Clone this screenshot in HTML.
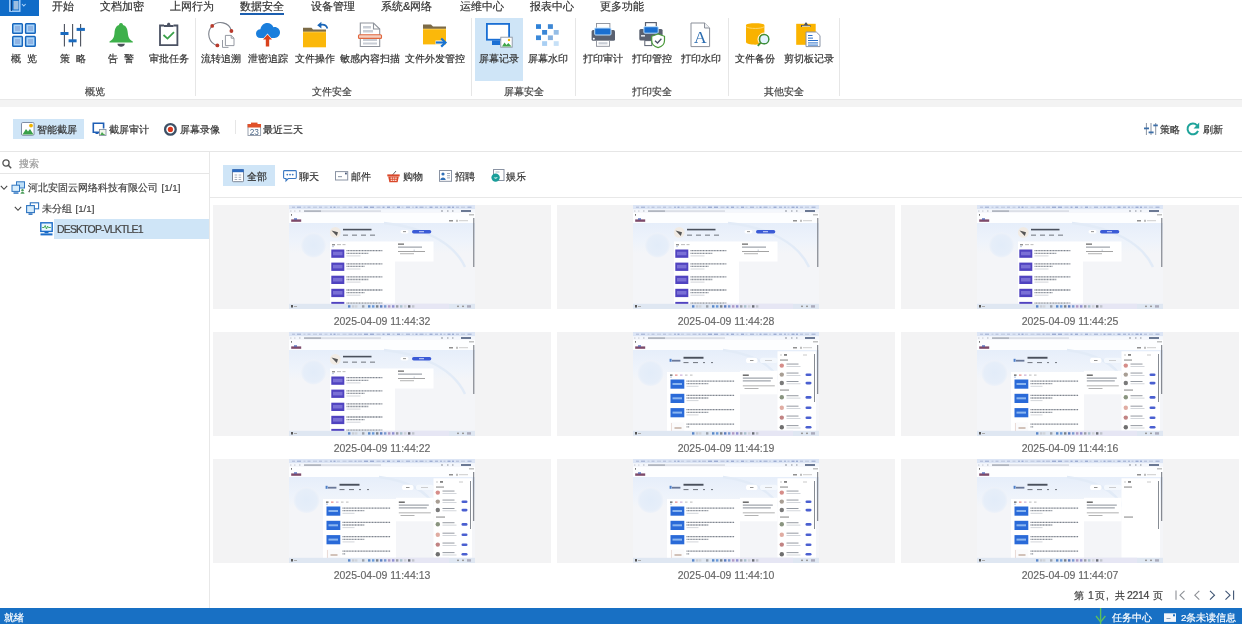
<!DOCTYPE html>
<html><head><meta charset="utf-8">
<style>
*{margin:0;padding:0;box-sizing:border-box}
html,body{width:1242px;height:624px;overflow:hidden;background:#fff}
body{position:relative;font-family:"Liberation Sans",sans-serif;color:#333}
.a{position:absolute;white-space:nowrap;will-change:transform;-webkit-text-stroke:0.2px currentColor}
.tab{font-size:11.2px;line-height:12px;top:-0.5px;color:#333}
.rl{font-size:9.6px;line-height:10px;top:53.8px;color:#333;text-align:center;width:80px}
.gl{font-size:9.6px;line-height:10px;top:87.3px;color:#444;text-align:center;width:80px}
.sep{position:absolute;top:18px;width:1px;height:78px;background:#e6e6e6}
svg{position:absolute;overflow:visible;z-index:2}
.tb{font-size:9.6px;line-height:10px;top:124.8px;color:#333}
.ft{font-size:9.6px;line-height:10px;top:171.5px;color:#333}
.cell{position:absolute;background:#f3f3f4;height:104px;width:338px}
.date{position:absolute;will-change:transform;-webkit-text-stroke:0.15px currentColor;font-size:10.5px;line-height:11px;color:#666;width:338px;text-align:center}
.pg{font-size:10px;line-height:11px;top:590px;color:#444}
.th{position:absolute;width:186px;height:104px;overflow:hidden;filter:blur(0.3px)}
</style></head><body>

<!-- top menu -->
<div class="a" style="left:0;top:0;width:39px;height:15.5px;background:#106cc8"></div>
<svg style="left:9px;top:0" width="18" height="13" viewBox="0 0 18 13">
 <rect x="0.8" y="-1" width="10" height="12.2" fill="none" stroke="#a9d2fb" stroke-width="1.4"/>
 <rect x="4.5" y="1" width="5" height="8.5" fill="#9bbde0"/>
 <line x1="2.5" y1="0" x2="2.5" y2="11" stroke="#0b3e80" stroke-width="1"/>
 <path d="M13 4 L14.8 6 L16.6 4" fill="none" stroke="#a9d2fb" stroke-width="1.1"/>
</svg>
<div class="a tab" style="left:51.5px">开始</div>
<div class="a tab" style="left:100px">文档加密</div>
<div class="a tab" style="left:170px">上网行为</div>
<div class="a tab" style="left:240px">数据安全</div>
<div class="a" style="left:240px;top:13.3px;width:44px;height:2px;background:#1c5fb0"></div>
<div class="a tab" style="left:310.5px">设备管理</div>
<div class="a tab" style="left:380.5px">系统&amp;网络</div>
<div class="a tab" style="left:460px">运维中心</div>
<div class="a tab" style="left:530px">报表中心</div>
<div class="a tab" style="left:600px">更多功能</div>

<!-- ribbon -->
<div class="a" style="left:475px;top:18px;width:48px;height:63px;background:#cfe5f7"></div>
<div class="sep" style="left:195px"></div>
<div class="sep" style="left:471px"></div>
<div class="sep" style="left:575px"></div>
<div class="sep" style="left:728px"></div>
<div class="sep" style="left:839px"></div>

<div class="a rl" style="left:-16px">概&nbsp;&nbsp;览</div>
<div class="a rl" style="left:32.5px">策&nbsp;&nbsp;略</div>
<div class="a rl" style="left:81.4px">告&nbsp;&nbsp;警</div>
<div class="a rl" style="left:128.7px">审批任务</div>
<div class="a rl" style="left:181px">流转追溯</div>
<div class="a rl" style="left:228px">泄密追踪</div>
<div class="a rl" style="left:275.4px">文件操作</div>
<div class="a rl" style="left:330.4px">敏感内容扫描</div>
<div class="a rl" style="left:395.2px">文件外发管控</div>
<div class="a rl" style="left:458.7px">屏幕记录</div>
<div class="a rl" style="left:507.5px">屏幕水印</div>
<div class="a rl" style="left:563px">打印审计</div>
<div class="a rl" style="left:611.6px">打印管控</div>
<div class="a rl" style="left:660.7px">打印水印</div>
<div class="a rl" style="left:715px">文件备份</div>
<div class="a rl" style="left:768.5px">剪切板记录</div>

<div class="a gl" style="left:55.3px">概览</div>
<div class="a gl" style="left:292px">文件安全</div>
<div class="a gl" style="left:483.5px">屏幕安全</div>
<div class="a gl" style="left:612px">打印安全</div>
<div class="a gl" style="left:744.3px">其他安全</div>

<!-- ribbon icons -->
<svg style="left:12px;top:23px" width="24" height="24" viewBox="0 0 24 24">
 <g fill="#a8d4fa" stroke="#1766bd" stroke-width="1.5">
  <rect x="0.75" y="0.75" width="9.6" height="9.6" rx="0.8"/><rect x="13.6" y="0.75" width="9.6" height="9.6" rx="0.8"/>
  <rect x="0.75" y="13.6" width="9.6" height="9.6" rx="0.8"/><rect x="13.6" y="13.6" width="9.6" height="9.6" rx="0.8"/>
 </g>
 <g fill="#8fb3e3"><rect x="3" y="3" width="5" height="5"/><rect x="16" y="3" width="5" height="5"/><rect x="3" y="16" width="5" height="5"/><rect x="16" y="16" width="5" height="5"/></g>
</svg>
<svg style="left:60px;top:23px" width="26" height="24" viewBox="0 0 26 24">
 <g stroke="#4a505c" stroke-width="1.1"><line x1="4.4" y1="1" x2="4.4" y2="23.4"/><line x1="12.6" y1="1" x2="12.6" y2="23.4"/><line x1="20.6" y1="1" x2="20.6" y2="23.4"/></g>
 <g fill="#1a6bbf"><rect x="0.5" y="9" width="8" height="3"/><rect x="8.6" y="16.3" width="8" height="3"/><rect x="16.6" y="4.9" width="8.3" height="3"/></g>
</svg>
<svg style="left:109px;top:22px" width="25" height="25" viewBox="0 0 25 25">
 <path d="M12 1 C13.6 1 14 2.3 14 3 C17.5 4 18.5 7 18.8 11 C19.2 15.5 20.5 17.5 23.8 19.6 L23.8 20.5 L0.5 20.5 L0.5 19.6 C3.8 17.5 5.2 15.5 5.5 11 C5.8 7 6.8 4 10 3 C10 2.3 10.4 1 12 1 Z" fill="#3db04a"/>
 <path d="M8.4 21.8 L15.8 21.8 C15.5 24 14 24.8 12.1 24.8 C10.2 24.8 8.7 24 8.4 21.8 Z" fill="#4b505a"/>
</svg>
<svg style="left:158px;top:22px" width="22" height="25" viewBox="0 0 22 25">
 <path d="M6 3.5 L2 3.5 L2 23.2 L19.4 23.2 L19.4 3.5 L15.5 3.5" fill="#fff" stroke="#4b5263" stroke-width="1.8"/>
 <path d="M6 5 L6 3 L9 3 C9 1.4 9.8 0.8 10.7 0.8 C11.6 0.8 12.4 1.4 12.4 3 L15.5 3 L15.5 5 Z" fill="#4b5263"/>
 <path d="M5.5 13 L9.5 16.6 L16 10.2" fill="none" stroke="#3aa14a" stroke-width="1.8"/>
</svg>
<svg style="left:207px;top:21px" width="29" height="28" viewBox="0 0 29 28">
 <path d="M10.4 24.6 A11.7 11.7 0 1 1 24.6 9.8" fill="none" stroke="#7d828c" stroke-width="1.1"/>
 <g fill="#b83a2c"><circle cx="5.2" cy="4.9" r="1.9"/><circle cx="24.4" cy="10" r="1.9"/><circle cx="10.4" cy="24.4" r="1.9"/></g>
 <path d="M15.5 19 L15.5 26.4 L21.5 26.4" fill="none" stroke="#8a8f99" stroke-width="0.9"/>
 <path d="M18.4 14.4 L24.2 14.4 L27 17.2 L27 24.6 L18.4 24.6 Z" fill="#fff" stroke="#8a8f99" stroke-width="0.9"/>
 <path d="M24.2 14.4 L24.2 17.2 L27 17.2" fill="none" stroke="#8a8f99" stroke-width="0.9"/>
</svg>
<svg style="left:255px;top:22px" width="26" height="26" viewBox="0 0 26 26">
 <path d="M5.5 16 C2.5 16 1 14 1 11.5 C1 9 3 7.2 5.4 7.2 C6 3.6 8.8 1 12.3 1 C15.2 1 17.5 2.8 18.4 5.2 C18.8 5.1 19.2 5.1 19.6 5.1 C22.6 5.1 25 7.5 25 10.6 C25 13.6 22.6 16 19.6 16 Z" fill="#1a7edc"/>
 <path d="M12.5 11.5 L18.2 18.2 L15.2 18.2 L15.2 24.8 L9.8 24.8 L9.8 18.2 L6.8 18.2 Z" fill="#fff"/>
 <path d="M12.5 12.6 L17 17.6 L14.2 17.6 L14.2 24.5 L10.8 24.5 L10.8 17.6 L8 17.6 Z" fill="#d9431d"/>
</svg>
<svg style="left:302px;top:21px" width="28" height="27" viewBox="0 0 28 27">
 <path d="M1 6.8 L9.5 6.8 L11 8.5 L24 8.5 L24 11 L1 11 Z" fill="#7c6b47"/>
 <rect x="1" y="11" width="23" height="15.3" fill="#fbb80a"/>
 <rect x="1" y="10.6" width="23" height="0.8" fill="#fdd567"/>
 <path d="M25.4 7.4 C24.5 4.5 22 3.2 18.5 3.8" fill="none" stroke="#1a66b8" stroke-width="1.7"/>
 <path d="M15.2 4.2 L19.4 0.8 L19.4 7.4 Z" fill="#1a66b8"/>
</svg>
<svg style="left:357px;top:22px" width="26" height="26" viewBox="0 0 26 26">
 <path d="M3.3 1 L16.5 1 L22.7 7 L22.7 24.5 L3.3 24.5 Z" fill="#fff" stroke="#8f949c" stroke-width="1.1"/>
 <path d="M16.5 1 L16.5 7 L22.7 7" fill="none" stroke="#8f949c" stroke-width="1.1"/>
 <g fill="#c8cdd5"><rect x="6" y="4" width="8" height="2.5"/><rect x="6" y="8" width="10" height="2.5"/><rect x="6" y="17" width="14" height="2"/><rect x="6" y="20.5" width="14" height="2"/></g>
 <rect x="1.5" y="12.8" width="23" height="3.6" rx="1" fill="#f4cfc0" stroke="#e0673f" stroke-width="1.1"/>
</svg>
<svg style="left:422px;top:24px" width="27" height="24" viewBox="0 0 27 24">
 <path d="M1 0.5 L9 0.5 L11 2.5 L24 2.5 L24 5 L1 5 Z" fill="#7c6b47"/>
 <rect x="1" y="5" width="23" height="15.4" fill="#fbb80a"/>
 <rect x="1" y="4.7" width="23" height="0.8" fill="#fdd567"/>
 <path d="M13.5 18.5 L21 18.5" stroke="#fff" stroke-width="4"/>
 <path d="M13.8 18.5 L22 18.5" stroke="#1a73d0" stroke-width="2.2"/>
 <path d="M19.2 14.5 L23.5 18.5 L19.2 22.6" fill="none" stroke="#1a73d0" stroke-width="2.2"/>
</svg>
<svg style="left:486px;top:23px" width="27" height="25" viewBox="0 0 27 25">
 <rect x="0.9" y="0.9" width="22.2" height="15.8" fill="#fff" stroke="#1a6fd4" stroke-width="1.8"/>
 <rect x="6" y="17.5" width="8" height="4.5" fill="#1a6fd4"/>
 <rect x="14.8" y="14.2" width="11.4" height="10" fill="#fff" stroke="#8c96a4" stroke-width="0.9"/>
 <path d="M16 23.5 L18.5 19.5 L20.5 22 L22.3 20 L25.5 23.5 Z" fill="#3fa54a"/>
 <circle cx="23" cy="17" r="1.2" fill="#f0b400"/>
</svg>
<svg style="left:535px;top:24px" width="25" height="23" viewBox="0 0 25 23">
 <rect x="1" y="0.2" width="5" height="4.7" fill="#2f82d8"/><rect x="12.9" y="0.2" width="5" height="4.7" fill="#3d87d4"/>
 <rect x="7.1" y="6" width="5" height="4.7" fill="#3a86d6"/><rect x="18.7" y="6" width="5" height="4.7" fill="#94bde6"/>
 <rect x="1" y="11.4" width="5" height="4.7" fill="#3b89d9"/><rect x="12.9" y="11.4" width="5" height="4.7" fill="#86b1df"/>
 <rect x="7.1" y="17.2" width="5" height="4.7" fill="#a9cff3"/><rect x="18.7" y="17.2" width="5" height="4.7" fill="#c6e0f7"/>
</svg>
<svg style="left:591px;top:23px" width="25" height="24" viewBox="0 0 25 24">
 <rect x="5.5" y="0.5" width="13.4" height="5.5" fill="#fff" stroke="#8a8f99" stroke-width="0.9"/>
 <rect x="0.6" y="7" width="23.4" height="10.8" rx="1.5" fill="#5a6170"/>
 <rect x="3.7" y="5" width="16.3" height="7" rx="1" fill="#1a6fd0" stroke="#bfe0fb" stroke-width="1"/>
 <circle cx="2.8" cy="15.8" r="1" fill="#fff"/>
 <rect x="5.5" y="17.5" width="13" height="5.8" fill="#fff" stroke="#8a8f99" stroke-width="0.9"/>
 <rect x="7.5" y="19.2" width="9" height="2.2" fill="#c9ced6"/>
</svg>
<svg style="left:639px;top:22px" width="27" height="26" viewBox="0 0 27 26">
 <rect x="6.5" y="0.6" width="10.8" height="5" fill="#fff" stroke="#5a6170" stroke-width="1.2"/>
 <rect x="0.3" y="7" width="23.3" height="11.6" rx="1.5" fill="#5a6170"/>
 <rect x="4.9" y="4.7" width="14.3" height="6.5" rx="1" fill="#1a6fd0" stroke="#bfe0fb" stroke-width="1"/>
 <rect x="2" y="13" width="4" height="1.6" fill="#dfe3ea"/>
 <rect x="5.8" y="18.6" width="7" height="5" fill="#fff" stroke="#5a6170" stroke-width="1"/>
 <path d="M19.1 12 L25.5 14.3 L25.5 18.5 C25.5 22.5 22.5 24.8 19.1 25.7 C15.7 24.8 12.7 22.5 12.7 18.5 L12.7 14.3 Z" fill="#fff" stroke="#4a9a3a" stroke-width="1.2"/>
 <path d="M16 18.8 L18.5 21 L22.4 16.8" fill="none" stroke="#4b4f66" stroke-width="1.3"/>
</svg>
<svg style="left:690px;top:22px" width="21" height="26" viewBox="0 0 21 26">
 <path d="M1 1 L14.5 1 L19.6 6 L19.6 24.6 L1 24.6 Z" fill="#fff" stroke="#8a8f99" stroke-width="1"/>
 <path d="M14.5 1 L14.5 6 L19.6 6" fill="#eef0f3" stroke="#8a8f99" stroke-width="1"/>
 <text x="10.3" y="20.8" font-family="Liberation Serif" font-size="17.5" fill="#2b6cb0" text-anchor="middle">A</text>
</svg>
<svg style="left:745px;top:21px" width="26" height="26" viewBox="0 0 26 26">
 <path d="M1 4 C1 1.5 19.4 1.5 19.4 4 L19.4 21 C19.4 24.5 1 24.5 1 21 Z" fill="#f9b200"/>
 <path d="M1.3 5.8 C4 8 16.5 8 19.1 5.8" fill="none" stroke="#fddb7a" stroke-width="0.9"/>
 <circle cx="19.2" cy="18.2" r="4.7" fill="#e3f4ff" stroke="#3d8f3d" stroke-width="1.6"/>
 <circle cx="19.2" cy="18.2" r="6.2" fill="none" stroke="#fff" stroke-width="1"/>
 <path d="M15.7 21.7 L12.8 24.8" stroke="#3d8f3d" stroke-width="1.8"/>
</svg>
<svg style="left:796px;top:22px" width="25" height="26" viewBox="0 0 25 26">
 <rect x="0.2" y="1.8" width="19.5" height="21" fill="#fbb400"/>
 <path d="M5 5 L5 3 L8 3 L9.5 0.5 L10.5 0.5 L12 3 L14.5 3 L14.5 5 Z" fill="#4b5263"/>
 <rect x="6" y="3.8" width="8" height="1" fill="#ffe9a8"/>
 <path d="M10 10 L20.3 10 L24 13.6 L24 24.6 L10 24.6 Z" fill="#fff" stroke="#8a93a6" stroke-width="1"/>
 <g fill="#2a6fc9"><rect x="12" y="13" width="4.5" height="1"/><rect x="12" y="15.6" width="5" height="1"/><rect x="12" y="18" width="10" height="1"/><rect x="12" y="20.4" width="10" height="1"/><rect x="12" y="22.6" width="10" height="1"/></g>
</svg>

<!-- toolbar icons -->
<svg style="left:21px;top:122px" width="14" height="14" viewBox="0 0 14 14">
 <rect x="0.5" y="0.5" width="12.6" height="12.8" rx="1.3" fill="#fff" stroke="#7f8fa6" stroke-width="1"/>
 <path d="M1.5 12.5 L5 7 L7 9.5 L9 7 L12.5 12.5 Z" fill="#3aa04a"/>
 <circle cx="10" cy="3.6" r="1.9" fill="#f0b400"/>
</svg>
<svg style="left:92px;top:122px" width="15" height="14" viewBox="0 0 15 14">
 <path d="M7 10.2 L1.3 10.2 L1.3 1.3 L11.6 1.3 L11.6 6.5" fill="none" stroke="#1f5fb5" stroke-width="1.6"/>
 <rect x="3.5" y="10" width="3" height="2" fill="#1f5fb5"/>
 <rect x="7.5" y="7.5" width="6.5" height="6" fill="#f1f6ec" stroke="#8a96a6" stroke-width="0.9"/>
 <path d="M8.2 13 L10 10 L11.2 11.5 L13.5 13 Z" fill="#49a64f"/>
</svg>
<svg style="left:164px;top:122.5px" width="13" height="13" viewBox="0 0 13 13">
 <circle cx="6.4" cy="6.4" r="5.3" fill="#fff" stroke="#3d5166" stroke-width="2.3"/>
 <circle cx="6.4" cy="6.4" r="2.6" fill="#d9381e"/>
</svg>
<svg style="left:247px;top:122px" width="15" height="14" viewBox="0 0 15 14">
 <rect x="1" y="2.5" width="12.6" height="11" fill="#fff" stroke="#8f98a6" stroke-width="0.9"/>
 <rect x="0.6" y="2" width="13.4" height="3.5" fill="#e0512a"/>
 <rect x="4" y="0.6" width="6.5" height="2" fill="#e0512a"/>
 <text x="7.3" y="12.8" font-family="Liberation Sans" font-size="8.3" fill="#4f6a8a" text-anchor="middle">23</text>
</svg>
<svg style="left:1144px;top:122px" width="14" height="14" viewBox="0 0 14 14">
 <g stroke="#8c95a3" stroke-width="1"><line x1="2.4" y1="1" x2="2.4" y2="13"/><line x1="7" y1="1" x2="7" y2="13"/><line x1="11.7" y1="1" x2="11.7" y2="13"/></g>
 <g fill="#3d6fa8"><rect x="0" y="5.5" width="5" height="1.8"/><rect x="4.6" y="9.5" width="5" height="1.8"/><rect x="9.3" y="2.5" width="4.5" height="1.8"/></g>
</svg>
<svg style="left:1186px;top:122px" width="14" height="14" viewBox="0 0 14 14">
 <path d="M11 3.3 A5.4 5.4 0 1 0 12 8.8" fill="none" stroke="#1ea39a" stroke-width="2"/>
 <path d="M13.2 0.6 L13.2 6.4 L7.6 6.4 Z" fill="#1ea39a"/>
</svg>

<!-- search + tree icons -->
<svg style="left:2px;top:158.5px" width="11" height="10" viewBox="0 0 11 10">
 <circle cx="4" cy="4" r="3.1" fill="none" stroke="#555" stroke-width="1.3"/>
 <path d="M6.3 6.3 L9.2 9.2" stroke="#555" stroke-width="1.5"/>
</svg>
<svg style="left:0px;top:185px" width="9" height="6" viewBox="0 0 9 6">
 <path d="M0.8 0.8 L4 4.3 L7.2 0.8" fill="none" stroke="#444" stroke-width="1.1"/>
</svg>
<svg style="left:11px;top:181px" width="15" height="14" viewBox="0 0 15 14">
 <rect x="5.5" y="0.8" width="8" height="6.2" fill="#bfe0f8" stroke="#3177c2" stroke-width="1"/>
 <rect x="1" y="4.2" width="7.5" height="6.2" fill="#d9eefc" stroke="#3177c2" stroke-width="1"/>
 <rect x="2.5" y="11.3" width="5" height="1.5" fill="#3177c2"/>
 <path d="M9.5 12.8 C9.5 10.5 13.5 10.5 13.5 12.8 Z" fill="#4a9d5a"/><circle cx="11.5" cy="9.3" r="1.2" fill="#4a9d5a"/>
</svg>
<svg style="left:14px;top:206px" width="9" height="6" viewBox="0 0 9 6">
 <path d="M0.8 0.8 L4 4.3 L7.2 0.8" fill="none" stroke="#444" stroke-width="1.1"/>
</svg>
<svg style="left:26px;top:201.5px" width="14" height="14" viewBox="0 0 14 14">
 <rect x="4.3" y="0.8" width="8.3" height="6" fill="#fff" stroke="#2f74c0" stroke-width="1.1"/>
 <rect x="0.6" y="3.6" width="7.8" height="7" fill="#d5ebfb" stroke="#2f74c0" stroke-width="1.1"/>
 <rect x="2.5" y="11.3" width="4" height="1.6" fill="#2f74c0"/>
</svg>
<svg style="left:40px;top:222px" width="14" height="14" viewBox="0 0 14 14">
 <rect x="0.8" y="0.8" width="11.4" height="8.6" fill="#e9f6ff" stroke="#1c6dc8" stroke-width="1.4"/>
 <path d="M2.2 5.5 L4.2 5.5 L5.2 3.5 L6.5 7 L7.6 4.2 L8.5 5.5 L10.8 5.5" fill="none" stroke="#35a24a" stroke-width="0.9"/>
 <rect x="4.5" y="9.6" width="4" height="1.6" fill="#1c6dc8"/>
 <rect x="0.5" y="11.4" width="12" height="2" fill="#1c6dc8"/>
</svg>

<!-- filter tab icons -->
<svg style="left:232px;top:169px" width="12" height="13" viewBox="0 0 12 13">
 <rect x="0.5" y="0.5" width="11" height="12.2" rx="0.8" fill="#fff" stroke="#7e8898" stroke-width="1"/>
 <rect x="0.2" y="0.2" width="11.6" height="3" fill="#2e6bc0"/>
 <g fill="#a7aebb"><rect x="2.6" y="5.5" width="2.6" height="1"/><rect x="6.6" y="5.5" width="2.6" height="1"/><rect x="2.6" y="7.8" width="2.6" height="1"/><rect x="6.6" y="7.8" width="2.6" height="1"/><rect x="2.6" y="10" width="2.6" height="1"/><rect x="6.6" y="10" width="2.6" height="1"/></g>
</svg>
<svg style="left:283px;top:170px" width="14" height="12" viewBox="0 0 14 12">
 <path d="M1.5 0.6 L12.4 0.6 C13 0.6 13.3 1 13.3 1.5 L13.3 7.6 C13.3 8.2 13 8.5 12.4 8.5 L5.2 8.5 L3 10.8 L3 8.5 L1.5 8.5 C1 8.5 0.6 8.2 0.6 7.6 L0.6 1.5 C0.6 1 1 0.6 1.5 0.6 Z" fill="#fff" stroke="#3a78c2" stroke-width="1.1"/>
 <g fill="#3a78c2"><circle cx="4.3" cy="4.6" r="0.9"/><circle cx="7" cy="4.6" r="0.9"/><circle cx="9.7" cy="4.6" r="0.9"/></g>
</svg>
<svg style="left:335px;top:171px" width="14" height="10" viewBox="0 0 14 10">
 <rect x="0.5" y="0.6" width="12.2" height="8.4" fill="#fff" stroke="#8a93a3" stroke-width="1"/>
 <rect x="3" y="5" width="4" height="1.2" fill="#9aa3b2"/>
 <rect x="10" y="1.6" width="1.8" height="1.8" fill="#4b5a78"/>
</svg>
<svg style="left:387px;top:169.5px" width="14" height="13" viewBox="0 0 14 13">
 <path d="M5.5 5 L9 1" stroke="#555" stroke-width="0.9"/>
 <rect x="0.3" y="4.4" width="12.4" height="2" fill="#d9482a"/>
 <path d="M1.2 6.4 L11.8 6.4 L10.6 12.2 L2.4 12.2 Z" fill="#d9482a"/>
 <g fill="#fbd9cf"><rect x="3.5" y="7.5" width="1.6" height="1.3"/><rect x="5.8" y="7.5" width="1.6" height="1.3"/><rect x="8.1" y="7.5" width="1.6" height="1.3"/><rect x="3.7" y="9.7" width="1.6" height="1.3"/><rect x="5.8" y="9.7" width="1.6" height="1.3"/><rect x="7.9" y="9.7" width="1.6" height="1.3"/></g>
</svg>
<svg style="left:439px;top:170px" width="13" height="12" viewBox="0 0 13 12">
 <rect x="0.5" y="0.5" width="12" height="10.8" fill="#fff" stroke="#8a93a3" stroke-width="1"/>
 <circle cx="4" cy="4" r="1.6" fill="#2f6fb8"/>
 <path d="M1.3 10 C1.3 6.5 6.7 6.5 6.7 10 Z" fill="#2f6fb8"/>
 <g fill="#a0a8b6"><rect x="8" y="3" width="3" height="1"/><rect x="8" y="5.2" width="3" height="1"/><rect x="8" y="7.4" width="3" height="1"/></g>
</svg>
<svg style="left:491px;top:169px" width="14" height="14" viewBox="0 0 14 14">
 <rect x="2.5" y="0.5" width="10.5" height="11" fill="#fff" stroke="#8a93a3" stroke-width="1"/>
 <rect x="4.5" y="2.5" width="4" height="1" fill="#b0b8c4"/>
 <circle cx="4.6" cy="8.6" r="4.2" fill="#1a9e9a"/>
 <path d="M2.6 8.6 C3.6 10.2 5.6 10.3 6.8 8 C5.5 8.5 4 8.6 2.6 8.6 Z" fill="#d5f2f0"/>
</svg>

<!-- pagination icons -->
<svg style="left:1175px;top:590px" width="60" height="11" viewBox="0 0 60 11">
 <g fill="none" stroke-width="1.1">
  <path d="M1 0.5 L1 9.8" stroke="#8c8f95"/><path d="M9.5 0.8 L5 5.2 L9.5 9.6" stroke="#8c8f95"/>
  <path d="M24.3 0.8 L19.8 5.2 L24.3 9.6" stroke="#8c8f95"/>
  <path d="M35 0.8 L39.5 5.2 L35 9.6" stroke="#3f5473"/>
  <path d="M50.5 0.8 L55 5.2 L50.5 9.6" stroke="#3f5473"/><path d="M58.6 0.5 L58.6 9.8" stroke="#3f5473"/>
 </g>
</svg>

<!-- status bar icons -->
<svg style="left:1095px;top:608px" width="12" height="16" viewBox="0 0 12 16">
 <path d="M5.6 0 L5.6 16" stroke="#5cc05c" stroke-width="1.4"/>
 <path d="M1 8 L5.6 14 L10.4 8" fill="none" stroke="#5cc05c" stroke-width="1.3"/>
</svg>
<svg style="left:1164px;top:613px" width="13" height="10" viewBox="0 0 13 10">
 <rect x="0" y="0.3" width="12" height="8.6" fill="#f3f6fa"/>
 <rect x="2.5" y="5" width="4" height="1" fill="#8c9fb8"/>
 <rect x="9" y="1.3" width="2" height="2" fill="#1870c4"/>
</svg>


<!-- grey band -->
<div class="a" style="left:0;top:99px;width:1242px;height:1px;background:#e8e8e8"></div>
<div class="a" style="left:0;top:100px;width:1242px;height:7px;background:#f3f3f3"></div>

<!-- toolbar -->
<div class="a" style="left:13px;top:119px;width:71px;height:20px;background:#cfe5f7"></div>
<div class="a tb" style="left:37.4px">智能截屏</div>
<div class="a tb" style="left:109px">截屏审计</div>
<div class="a tb" style="left:180px">屏幕录像</div>
<div class="a" style="left:235px;top:120px;width:1px;height:14px;background:#e6e6e6"></div>
<div class="a tb" style="left:263.4px">最近三天</div>
<div class="a tb" style="left:1160px">策略</div>
<div class="a tb" style="left:1202.6px">刷新</div>
<div class="a" style="left:0;top:151px;width:1242px;height:1px;background:#e6e6e6"></div>

<!-- left panel -->
<div class="a" style="left:209px;top:152px;width:1px;height:456px;background:#e8e8e8"></div>
<div class="a" style="left:19px;top:158.5px;font-size:9.8px;line-height:10px;color:#999">搜索</div>
<div class="a" style="left:0;top:173px;width:209px;height:1px;background:#e6e6e6"></div>
<div class="a" style="left:28px;top:183.3px;font-size:9.7px;line-height:10px;color:#444">河北安固云网络科技有限公司<span style="margin-left:3.5px">[1/1]</span></div>
<div class="a" style="left:42px;top:204.3px;font-size:9.7px;line-height:10px;color:#444">未分组<span style="margin-left:3.5px">[1/1]</span></div>
<div class="a" style="left:54px;top:219px;width:155px;height:20px;background:#cfe5f7"></div>
<div class="a" style="left:56.6px;top:224px;font-size:10.5px;line-height:11px;color:#444;letter-spacing:-0.85px">DESKTOP-VLKTLE1</div>

<!-- filter tabs -->
<div class="a" style="left:210px;top:197px;width:1032px;height:1px;background:#e8e8e8"></div>
<div class="a" style="left:223px;top:165px;width:52px;height:20.5px;background:#cfe5f7"></div>
<div class="a ft" style="left:247px">全部</div>
<div class="a ft" style="left:299px">聊天</div>
<div class="a ft" style="left:350.7px">邮件</div>
<div class="a ft" style="left:402.8px">购物</div>
<div class="a ft" style="left:454.7px">招聘</div>
<div class="a ft" style="left:506.2px">娱乐</div>

<!--GRID-->
<svg width="0" height="0" style="position:absolute"><defs><linearGradient id="hg" x1="0" y1="0" x2="0" y2="1"><stop offset="0" stop-color="#e6eefa"/><stop offset="0.6" stop-color="#eef3fb"/><stop offset="1" stop-color="#f4f5f8"/></linearGradient><radialGradient id="cg"><stop offset="0" stop-color="#e2ecf9"/><stop offset="0.8" stop-color="#e6eef9"/><stop offset="1" stop-color="#eef2f9"/></radialGradient><g id="tA"><rect width="186" height="104" fill="#f4f5f8"/><rect width="186" height="4.3" fill="#dce5f5"/><rect x="3" y="1.6" width="3" height="1.3" fill="#b8c3dd"/><rect x="8" y="1.6" width="4" height="1.3" fill="#a9b6d6"/><rect x="14.5" y="1.6" width="2" height="1.3" fill="#c3cce2"/><rect x="18.5" y="1.6" width="3" height="1.3" fill="#b8c3dd"/><rect x="24.0" y="1.6" width="4" height="1.3" fill="#c3cce2"/><rect x="30.0" y="1.6" width="3" height="1.3" fill="#b8c3dd"/><rect x="35.5" y="1.6" width="3" height="1.3" fill="#c3cce2"/><rect x="41.0" y="1.6" width="2" height="1.3" fill="#a9b6d6"/><rect x="44.5" y="1.6" width="2" height="1.3" fill="#97a7cf"/><rect x="48.0" y="1.6" width="3" height="1.3" fill="#c3cce2"/><rect x="53.5" y="1.6" width="4" height="1.3" fill="#c3cce2"/><rect x="59.5" y="1.6" width="4" height="1.3" fill="#b8c3dd"/><rect x="65.5" y="1.6" width="2" height="1.3" fill="#a9b6d6"/><rect x="69.0" y="1.6" width="4" height="1.3" fill="#b8c3dd"/><rect x="75.0" y="1.6" width="4" height="1.3" fill="#97a7cf"/><rect x="81.0" y="1.6" width="4" height="1.3" fill="#97a7cf"/><rect x="87.5" y="1.6" width="4" height="1.3" fill="#b8c3dd"/><rect x="93.5" y="1.6" width="2" height="1.3" fill="#97a7cf"/><rect x="98.0" y="1.6" width="3" height="1.3" fill="#97a7cf"/><rect x="103.5" y="1.6" width="2" height="1.3" fill="#b8c3dd"/><rect x="108.0" y="1.6" width="3" height="1.3" fill="#97a7cf"/><rect x="112.5" y="1.6" width="2" height="1.3" fill="#c3cce2"/><rect x="117.0" y="1.6" width="4" height="1.3" fill="#a9b6d6"/><rect x="123.0" y="1.6" width="2" height="1.3" fill="#c3cce2"/><rect x="126.5" y="1.6" width="2" height="1.3" fill="#97a7cf"/><rect x="130.5" y="1.6" width="4" height="1.3" fill="#a9b6d6"/><rect x="136.0" y="1.6" width="2" height="1.3" fill="#c3cce2"/><rect x="140.5" y="1.6" width="3" height="1.3" fill="#97a7cf"/><rect x="146.0" y="1.6" width="3" height="1.3" fill="#a9b6d6"/><rect x="151.0" y="1.6" width="2" height="1.3" fill="#a9b6d6"/><rect x="154.5" y="1.6" width="2" height="1.3" fill="#b8c3dd"/><rect x="158.5" y="1.6" width="3" height="1.3" fill="#97a7cf"/><rect x="163.0" y="1.6" width="2" height="1.3" fill="#97a7cf"/><rect x="167.0" y="1.6" width="3" height="1.3" fill="#b8c3dd"/><rect x="172.0" y="1.6" width="4" height="1.3" fill="#c3cce2"/><rect x="178.5" y="1.6" width="4" height="1.3" fill="#a9b6d6"/><rect y="4.3" width="186" height="3.5" fill="#f4f7fc"/><rect x="15" y="5.6" width="17" height="0.9" fill="#6f7684"/><rect x="32" y="5.6" width="60" height="0.9" fill="#c3c8d1"/><rect x="152" y="5.4" width="2" height="1.2" fill="#9aa0aa"/><rect x="158" y="5.4" width="1.5" height="1.2" fill="#9aa0aa"/><rect x="163" y="5.4" width="1.5" height="1.2" fill="#9aa0aa"/><rect x="172" y="5.2" width="10" height="1.6" fill="#4a5a7a"/><rect x="1" y="5.6" width="1.5" height="0.9" fill="#c0c4cc"/><rect x="5" y="5.6" width="1.5" height="0.9" fill="#c0c4cc"/><rect x="10" y="5.4" width="1.5" height="1.2" fill="#b8bdc6"/><rect y="7.8" width="186" height="10.2" fill="#fdfeff"/><rect x="2" y="9.2" width="1" height="1.4" fill="#555"/><rect x="180" y="9.4" width="5" height="0.9" fill="#999"/><rect x="2.2" y="14.4" width="10" height="2.4" fill="#7d4a6a"/><rect x="5" y="13.4" width="3" height="1.2" fill="#3a55b0"/><rect x="160" y="15.2" width="4" height="1.2" fill="#777"/><rect x="167" y="14.8" width="2" height="2" fill="#bbb"/><rect x="170" y="15.2" width="9" height="1" fill="#ccc"/><rect y="18" width="186" height="30" fill="url(#hg)"/><path d="M95 18 C135 22 165 38 176 62" fill="none" stroke="#e2ebf7" stroke-width="2.5"/><circle cx="24.5" cy="40" r="12.5" fill="url(#cg)"/><circle cx="46.3" cy="27.4" r="5.4" fill="#f1ebe4"/><path d="M42.5 25.5 L49 27.2 L47.8 31 Z" fill="#555"/><rect x="54" y="23.8" width="28.5" height="1.6" fill="#4a505c"/><rect x="54" y="29.6" width="5" height="1.1" fill="#7a7f88"/><rect x="63" y="29.6" width="5" height="1.1" fill="#7a7f88"/><rect x="72" y="29.6" width="5" height="1.1" fill="#7a7f88"/><rect x="81" y="29.6" width="5" height="1.1" fill="#7a7f88"/><rect x="111.5" y="25" width="8" height="3.4" rx="1.7" fill="#fff"/><rect x="114" y="26.3" width="3" height="0.8" fill="#777"/><rect x="123" y="25" width="19.3" height="3.4" rx="1.7" fill="#3b5bd6"/><rect x="130" y="26.3" width="5" height="0.9" fill="#dfe6ff"/><rect x="41" y="36.5" width="65" height="62.5" fill="#fff"/><rect x="106" y="36.5" width="38.5" height="20" fill="#fff"/><rect x="43" y="39.3" width="3" height="1" fill="#666"/><rect x="48" y="39.3" width="4" height="0.8" fill="#aaa"/><rect x="53.5" y="39.3" width="3" height="0.8" fill="#aaa"/><rect x="43.5" y="41.3" width="1" height="0.8" fill="#5a7ac0"/><rect x="109" y="38.6" width="6" height="1" fill="#444"/><rect x="109" y="41.6" width="24" height="1" fill="#8a9099"/><rect x="109" y="46" width="27" height="0.9" fill="#999"/><rect x="111" y="48.3" width="14" height="0.9" fill="#aaa"/><rect x="184.3" y="13" width="1" height="49" fill="#6b6f78"/><rect x="124.5" y="44.5" width="1.5" height="1.5" fill="#d8dde6"/><rect x="42.3" y="44.5" width="13" height="8.3" fill="#5043c0"/><rect x="44" y="46.7" width="9.5" height="3.6" fill="#7a70d6"/><line x1="57.5" y1="45.7" x2="93.5" y2="45.7" stroke="#7d838d" stroke-width="1.3" stroke-dasharray="1.1 0.45"/><line x1="57.5" y1="48.300000000000004" x2="79.5" y2="48.300000000000004" stroke="#8a9099" stroke-width="1.3" stroke-dasharray="1.1 0.45"/><rect x="57.5" y="50.4" width="14" height="1" fill="#d2d5da"/><rect x="42.3" y="57.6" width="13" height="8.3" fill="#5043c0"/><rect x="44" y="59.800000000000004" width="9.5" height="3.6" fill="#7a70d6"/><line x1="57.5" y1="58.800000000000004" x2="93.5" y2="58.800000000000004" stroke="#7d838d" stroke-width="1.3" stroke-dasharray="1.1 0.45"/><line x1="57.5" y1="61.400000000000006" x2="75.5" y2="61.400000000000006" stroke="#8a9099" stroke-width="1.3" stroke-dasharray="1.1 0.45"/><rect x="57.5" y="63.5" width="14" height="1" fill="#d2d5da"/><rect x="42.3" y="70.7" width="13" height="8.3" fill="#5043c0"/><rect x="44" y="72.9" width="9.5" height="3.6" fill="#7a70d6"/><line x1="57.5" y1="71.89999999999999" x2="93.5" y2="71.89999999999999" stroke="#7d838d" stroke-width="1.3" stroke-dasharray="1.1 0.45"/><line x1="57.5" y1="74.5" x2="79.5" y2="74.5" stroke="#8a9099" stroke-width="1.3" stroke-dasharray="1.1 0.45"/><rect x="57.5" y="76.6" width="14" height="1" fill="#d2d5da"/><rect x="42.3" y="83.8" width="13" height="8.3" fill="#5043c0"/><rect x="44" y="86.0" width="9.5" height="3.6" fill="#7a70d6"/><line x1="57.5" y1="84.99999999999999" x2="93.5" y2="84.99999999999999" stroke="#7d838d" stroke-width="1.3" stroke-dasharray="1.1 0.45"/><line x1="57.5" y1="87.6" x2="75.5" y2="87.6" stroke="#8a9099" stroke-width="1.3" stroke-dasharray="1.1 0.45"/><rect x="57.5" y="89.69999999999999" width="14" height="1" fill="#d2d5da"/><rect x="42.3" y="96.9" width="13" height="8.3" fill="#5043c0"/><rect x="44" y="99.10000000000001" width="9.5" height="3.6" fill="#7a70d6"/><line x1="57.5" y1="98.1" x2="93.5" y2="98.1" stroke="#7d838d" stroke-width="1.3" stroke-dasharray="1.1 0.45"/><line x1="57.5" y1="100.7" x2="79.5" y2="100.7" stroke="#8a9099" stroke-width="1.3" stroke-dasharray="1.1 0.45"/><rect x="57.5" y="102.8" width="14" height="1" fill="#d2d5da"/><rect y="98.8" width="186" height="5.2" fill="#dfe7f2"/><rect x="90" y="98.8" width="70" height="5.2" fill="#e6e6f4"/><rect x="2" y="100" width="2" height="2.5" fill="#555"/><rect x="5" y="101" width="3" height="1" fill="#aaa"/><rect x="59" y="100.2" width="2.4" height="2.4" fill="#5a86c8"/><rect x="63" y="100.2" width="2.4" height="2.4" fill="#c8ccd4"/><rect x="66" y="100.2" width="2.4" height="2.4" fill="#d0d4da"/><rect x="73" y="100.2" width="2.4" height="2.4" fill="#9aa0aa"/><rect x="79" y="100.2" width="2.4" height="2.4" fill="#5a88c8"/><rect x="83" y="100.2" width="2.4" height="2.4" fill="#6a98d8"/><rect x="87" y="100.2" width="2.4" height="2.4" fill="#7a808a"/><rect x="91" y="100.2" width="2.4" height="2.4" fill="#5a7fc0"/><rect x="95" y="100.2" width="2.4" height="2.4" fill="#7a9ad0"/><rect x="99" y="100.2" width="2.4" height="2.4" fill="#b09ac4"/><rect x="103" y="100.2" width="2.4" height="2.4" fill="#9090d0"/><rect x="107" y="100.2" width="2.4" height="2.4" fill="#9a9ea6"/><rect x="111" y="100.2" width="2.4" height="2.4" fill="#a8c0cc"/><rect x="115" y="100.2" width="2.4" height="2.4" fill="#d0d4da"/><rect x="119" y="100.2" width="2.4" height="2.4" fill="#6a6e76"/><rect x="123" y="100.2" width="2.4" height="2.4" fill="#c0c4cc"/><rect x="168" y="100.6" width="2" height="1.5" fill="#999"/><rect x="173" y="100.6" width="2" height="1.5" fill="#999"/><rect x="178" y="100.2" width="4" height="2.4" fill="#aab"/></g><g id="tB"><rect width="186" height="104" fill="#f4f5f8"/><rect width="186" height="4.3" fill="#dce5f5"/><rect x="3" y="1.6" width="3" height="1.3" fill="#b8c3dd"/><rect x="8" y="1.6" width="4" height="1.3" fill="#a9b6d6"/><rect x="14.5" y="1.6" width="2" height="1.3" fill="#c3cce2"/><rect x="18.5" y="1.6" width="3" height="1.3" fill="#b8c3dd"/><rect x="24.0" y="1.6" width="4" height="1.3" fill="#c3cce2"/><rect x="30.0" y="1.6" width="3" height="1.3" fill="#b8c3dd"/><rect x="35.5" y="1.6" width="3" height="1.3" fill="#c3cce2"/><rect x="41.0" y="1.6" width="2" height="1.3" fill="#a9b6d6"/><rect x="44.5" y="1.6" width="2" height="1.3" fill="#97a7cf"/><rect x="48.0" y="1.6" width="3" height="1.3" fill="#c3cce2"/><rect x="53.5" y="1.6" width="4" height="1.3" fill="#c3cce2"/><rect x="59.5" y="1.6" width="4" height="1.3" fill="#b8c3dd"/><rect x="65.5" y="1.6" width="2" height="1.3" fill="#a9b6d6"/><rect x="69.0" y="1.6" width="4" height="1.3" fill="#b8c3dd"/><rect x="75.0" y="1.6" width="4" height="1.3" fill="#97a7cf"/><rect x="81.0" y="1.6" width="4" height="1.3" fill="#97a7cf"/><rect x="87.5" y="1.6" width="4" height="1.3" fill="#b8c3dd"/><rect x="93.5" y="1.6" width="2" height="1.3" fill="#97a7cf"/><rect x="98.0" y="1.6" width="3" height="1.3" fill="#97a7cf"/><rect x="103.5" y="1.6" width="2" height="1.3" fill="#b8c3dd"/><rect x="108.0" y="1.6" width="3" height="1.3" fill="#97a7cf"/><rect x="112.5" y="1.6" width="2" height="1.3" fill="#c3cce2"/><rect x="117.0" y="1.6" width="4" height="1.3" fill="#a9b6d6"/><rect x="123.0" y="1.6" width="2" height="1.3" fill="#c3cce2"/><rect x="126.5" y="1.6" width="2" height="1.3" fill="#97a7cf"/><rect x="130.5" y="1.6" width="4" height="1.3" fill="#a9b6d6"/><rect x="136.0" y="1.6" width="2" height="1.3" fill="#c3cce2"/><rect x="140.5" y="1.6" width="3" height="1.3" fill="#97a7cf"/><rect x="146.0" y="1.6" width="3" height="1.3" fill="#a9b6d6"/><rect x="151.0" y="1.6" width="2" height="1.3" fill="#a9b6d6"/><rect x="154.5" y="1.6" width="2" height="1.3" fill="#b8c3dd"/><rect x="158.5" y="1.6" width="3" height="1.3" fill="#97a7cf"/><rect x="163.0" y="1.6" width="2" height="1.3" fill="#97a7cf"/><rect x="167.0" y="1.6" width="3" height="1.3" fill="#b8c3dd"/><rect x="172.0" y="1.6" width="4" height="1.3" fill="#c3cce2"/><rect x="178.5" y="1.6" width="4" height="1.3" fill="#a9b6d6"/><rect y="4.3" width="186" height="3.5" fill="#f4f7fc"/><rect x="15" y="5.6" width="17" height="0.9" fill="#6f7684"/><rect x="32" y="5.6" width="60" height="0.9" fill="#c3c8d1"/><rect x="152" y="5.4" width="2" height="1.2" fill="#9aa0aa"/><rect x="158" y="5.4" width="1.5" height="1.2" fill="#9aa0aa"/><rect x="163" y="5.4" width="1.5" height="1.2" fill="#9aa0aa"/><rect x="172" y="5.2" width="10" height="1.6" fill="#4a5a7a"/><rect x="1" y="5.6" width="1.5" height="0.9" fill="#c0c4cc"/><rect x="5" y="5.6" width="1.5" height="0.9" fill="#c0c4cc"/><rect x="10" y="5.4" width="1.5" height="1.2" fill="#b8bdc6"/><rect y="7.8" width="186" height="10.2" fill="#fdfeff"/><rect x="2" y="9.2" width="1" height="1.4" fill="#555"/><rect x="180" y="9.4" width="5" height="0.9" fill="#999"/><rect x="2.2" y="14.4" width="10" height="2.4" fill="#7d4a6a"/><rect x="5" y="13.4" width="3" height="1.2" fill="#3a55b0"/><rect x="160" y="15.2" width="4" height="1.2" fill="#777"/><rect x="167" y="14.8" width="2" height="2" fill="#bbb"/><rect x="170" y="15.2" width="9" height="1" fill="#ccc"/><rect y="18" width="186" height="30" fill="url(#hg)"/><path d="M90 18 C120 22 138 32 146 48" fill="none" stroke="#e2ebf7" stroke-width="2.5"/><circle cx="17.5" cy="41" r="13" fill="url(#cg)"/><rect x="36.6" y="26.8" width="2" height="3" fill="#4f7fc8"/><rect x="39" y="27.8" width="8.4" height="1.8" fill="#6a7898"/><rect x="50.5" y="24.8" width="20" height="1.9" fill="#4a505c"/><rect x="50.5" y="30" width="5" height="1.1" fill="#7a7f88"/><rect x="60" y="30" width="5" height="1.1" fill="#7a7f88"/><rect x="70" y="30" width="2" height="1.1" fill="#7a7f88"/><rect x="78" y="30" width="2" height="1.1" fill="#7a7f88"/><rect x="113" y="25.8" width="11.5" height="5.2" rx="2.6" fill="#fff"/><rect x="117" y="28" width="3.5" height="0.8" fill="#777"/><rect x="127" y="25.8" width="17.5" height="5.2" rx="2.6" fill="#f4f8fd"/><rect x="132" y="28" width="7" height="0.7" fill="#bbb"/><rect x="34" y="40" width="73" height="59" fill="#fff"/><rect x="107" y="38.8" width="37.5" height="23.5" fill="#fff"/><rect x="37" y="42.6" width="2.5" height="1" fill="#333"/><rect x="42" y="42.6" width="2.5" height="1" fill="#e07070"/><rect x="47" y="42.6" width="2.5" height="1" fill="#c0a0d0"/><rect x="52" y="42.6" width="2.5" height="1" fill="#bbb"/><rect x="57" y="42.6" width="2.5" height="1" fill="#bbb"/><rect x="37.5" y="44.7" width="1" height="0.8" fill="#3a6ac0"/><rect x="109.8" y="42.6" width="6" height="1.1" fill="#333"/><rect x="109.8" y="45.6" width="30" height="1" fill="#8a9099"/><rect x="109.8" y="48.4" width="28" height="1" fill="#8a9099"/><rect x="109.8" y="53.4" width="32" height="0.9" fill="#aaa"/><rect x="111.5" y="56" width="14" height="0.9" fill="#aaa"/><rect x="144.5" y="19.3" width="38.5" height="79.5" fill="#fff"/><rect x="181" y="22" width="0.9" height="48" fill="#7a7f88"/><rect x="184.2" y="13" width="1" height="49" fill="#6b6f78"/><rect x="147" y="22.6" width="2" height="0.8" fill="#bbb"/><rect x="151" y="22.4" width="3" height="1.1" fill="#333"/><rect x="170" y="22.6" width="4" height="0.8" fill="#bbb"/><rect x="147" y="27.6" width="8" height="0.9" fill="#777"/><rect x="147" y="57.6" width="9" height="0.9" fill="#777"/><rect x="37.5" y="47.5" width="13.8" height="9.2" fill="#2a6ad8"/><rect x="39.5" y="51.0" width="9.5" height="2" fill="#8bb6f0"/><line x1="53.5" y1="49.1" x2="101.5" y2="49.1" stroke="#7d838d" stroke-width="1.3" stroke-dasharray="1.1 0.45"/><line x1="53.5" y1="51.7" x2="75.5" y2="51.7" stroke="#8a9099" stroke-width="1.3" stroke-dasharray="1.1 0.45"/><rect x="53.5" y="53.8" width="12" height="1" fill="#d2d5da"/><rect x="37.5" y="61.8" width="13.8" height="9.2" fill="#2a6ad8"/><rect x="39.5" y="65.3" width="9.5" height="2" fill="#8bb6f0"/><line x1="53.5" y1="63.4" x2="101.5" y2="63.4" stroke="#7d838d" stroke-width="1.3" stroke-dasharray="1.1 0.45"/><line x1="53.5" y1="66.0" x2="75.5" y2="66.0" stroke="#8a9099" stroke-width="1.3" stroke-dasharray="1.1 0.45"/><rect x="53.5" y="68.1" width="12" height="1" fill="#d2d5da"/><rect x="37.5" y="76.1" width="13.8" height="9.2" fill="#2a6ad8"/><rect x="39.5" y="79.6" width="9.5" height="2" fill="#8bb6f0"/><line x1="53.5" y1="77.69999999999999" x2="101.5" y2="77.69999999999999" stroke="#7d838d" stroke-width="1.3" stroke-dasharray="1.1 0.45"/><line x1="53.5" y1="80.3" x2="75.5" y2="80.3" stroke="#8a9099" stroke-width="1.3" stroke-dasharray="1.1 0.45"/><rect x="53.5" y="82.39999999999999" width="12" height="1" fill="#d2d5da"/><rect x="37.5" y="90.4" width="13.8" height="8.5" fill="#fbfbfc"/><rect x="38" y="91" width="0.6" height="8" fill="#e0c8c0"/><rect x="41.5" y="95.2" width="7" height="1.6" fill="#c8b4a8"/><line x1="53.5" y1="92.19999999999999" x2="101.5" y2="92.19999999999999" stroke="#7d838d" stroke-width="1.3" stroke-dasharray="1.1 0.45"/><line x1="53.5" y1="94.8" x2="56.5" y2="94.8" stroke="#8a9099" stroke-width="1.3" stroke-dasharray="1.1 0.45"/><rect x="53.5" y="96.89999999999999" width="0" height="1" fill="#d2d5da"/><circle cx="148.8" cy="33.6" r="2.2" fill="#c0504a" opacity="0.65"/><rect x="153.5" y="31.6" width="12" height="0.9" fill="#8a8f98"/><rect x="153.5" y="34.0" width="14" height="0.8" fill="#c8ccd2"/><circle cx="148.8" cy="42.6" r="2.2" fill="#7a6a5a" opacity="0.65"/><rect x="153.5" y="40.6" width="12" height="0.9" fill="#8a8f98"/><rect x="153.5" y="43.0" width="14" height="0.8" fill="#c8ccd2"/><rect x="172.5" y="41.4" width="6" height="2.6" rx="1.3" fill="#4a5fd0"/><circle cx="148.8" cy="51" r="2.2" fill="#333" opacity="0.65"/><rect x="153.5" y="49" width="12" height="0.9" fill="#8a8f98"/><rect x="153.5" y="51.4" width="14" height="0.8" fill="#c8ccd2"/><rect x="172.5" y="49.8" width="6" height="2.6" rx="1.3" fill="#4a5fd0"/><circle cx="148.8" cy="65.3" r="2.2" fill="#4a5a3a" opacity="0.65"/><rect x="153.5" y="63.3" width="12" height="0.9" fill="#8a8f98"/><rect x="153.5" y="65.7" width="14" height="0.8" fill="#c8ccd2"/><rect x="172.5" y="64.1" width="6" height="2.6" rx="1.3" fill="#4a5fd0"/><circle cx="148.8" cy="75.7" r="2.2" fill="#d08070" opacity="0.65"/><rect x="153.5" y="73.7" width="12" height="0.9" fill="#8a8f98"/><rect x="153.5" y="76.10000000000001" width="14" height="0.8" fill="#c8ccd2"/><rect x="172.5" y="74.5" width="6" height="2.6" rx="1.3" fill="#4a5fd0"/><circle cx="148.8" cy="85.6" r="2.2" fill="#a04040" opacity="0.65"/><rect x="153.5" y="83.6" width="12" height="0.9" fill="#8a8f98"/><rect x="153.5" y="86.0" width="14" height="0.8" fill="#c8ccd2"/><rect x="172.5" y="84.39999999999999" width="6" height="2.6" rx="1.3" fill="#4a5fd0"/><circle cx="148.8" cy="95.2" r="2.2" fill="#222" opacity="0.65"/><rect x="153.5" y="93.2" width="12" height="0.9" fill="#8a8f98"/><rect x="153.5" y="95.60000000000001" width="14" height="0.8" fill="#c8ccd2"/><rect x="172.5" y="94.0" width="6" height="2.6" rx="1.3" fill="#4a5fd0"/><rect y="98.8" width="186" height="5.2" fill="#dfe7f2"/><rect x="90" y="98.8" width="70" height="5.2" fill="#e6e6f4"/><rect x="2" y="100" width="2" height="2.5" fill="#555"/><rect x="5" y="101" width="3" height="1" fill="#aaa"/><rect x="59" y="100.2" width="2.4" height="2.4" fill="#5a86c8"/><rect x="63" y="100.2" width="2.4" height="2.4" fill="#c8ccd4"/><rect x="66" y="100.2" width="2.4" height="2.4" fill="#d0d4da"/><rect x="73" y="100.2" width="2.4" height="2.4" fill="#9aa0aa"/><rect x="79" y="100.2" width="2.4" height="2.4" fill="#5a88c8"/><rect x="83" y="100.2" width="2.4" height="2.4" fill="#6a98d8"/><rect x="87" y="100.2" width="2.4" height="2.4" fill="#7a808a"/><rect x="91" y="100.2" width="2.4" height="2.4" fill="#5a7fc0"/><rect x="95" y="100.2" width="2.4" height="2.4" fill="#7a9ad0"/><rect x="99" y="100.2" width="2.4" height="2.4" fill="#b09ac4"/><rect x="103" y="100.2" width="2.4" height="2.4" fill="#9090d0"/><rect x="107" y="100.2" width="2.4" height="2.4" fill="#9a9ea6"/><rect x="111" y="100.2" width="2.4" height="2.4" fill="#a8c0cc"/><rect x="115" y="100.2" width="2.4" height="2.4" fill="#d0d4da"/><rect x="119" y="100.2" width="2.4" height="2.4" fill="#6a6e76"/><rect x="123" y="100.2" width="2.4" height="2.4" fill="#c0c4cc"/><rect x="168" y="100.6" width="2" height="1.5" fill="#999"/><rect x="173" y="100.6" width="2" height="1.5" fill="#999"/><rect x="178" y="100.2" width="4" height="2.4" fill="#aab"/></g><g id="tC"><rect width="186" height="104" fill="#f4f5f8"/><rect width="186" height="4.3" fill="#dce5f5"/><rect x="3" y="1.6" width="3" height="1.3" fill="#b8c3dd"/><rect x="8" y="1.6" width="4" height="1.3" fill="#a9b6d6"/><rect x="14.5" y="1.6" width="2" height="1.3" fill="#c3cce2"/><rect x="18.5" y="1.6" width="3" height="1.3" fill="#b8c3dd"/><rect x="24.0" y="1.6" width="4" height="1.3" fill="#c3cce2"/><rect x="30.0" y="1.6" width="3" height="1.3" fill="#b8c3dd"/><rect x="35.5" y="1.6" width="3" height="1.3" fill="#c3cce2"/><rect x="41.0" y="1.6" width="2" height="1.3" fill="#a9b6d6"/><rect x="44.5" y="1.6" width="2" height="1.3" fill="#97a7cf"/><rect x="48.0" y="1.6" width="3" height="1.3" fill="#c3cce2"/><rect x="53.5" y="1.6" width="4" height="1.3" fill="#c3cce2"/><rect x="59.5" y="1.6" width="4" height="1.3" fill="#b8c3dd"/><rect x="65.5" y="1.6" width="2" height="1.3" fill="#a9b6d6"/><rect x="69.0" y="1.6" width="4" height="1.3" fill="#b8c3dd"/><rect x="75.0" y="1.6" width="4" height="1.3" fill="#97a7cf"/><rect x="81.0" y="1.6" width="4" height="1.3" fill="#97a7cf"/><rect x="87.5" y="1.6" width="4" height="1.3" fill="#b8c3dd"/><rect x="93.5" y="1.6" width="2" height="1.3" fill="#97a7cf"/><rect x="98.0" y="1.6" width="3" height="1.3" fill="#97a7cf"/><rect x="103.5" y="1.6" width="2" height="1.3" fill="#b8c3dd"/><rect x="108.0" y="1.6" width="3" height="1.3" fill="#97a7cf"/><rect x="112.5" y="1.6" width="2" height="1.3" fill="#c3cce2"/><rect x="117.0" y="1.6" width="4" height="1.3" fill="#a9b6d6"/><rect x="123.0" y="1.6" width="2" height="1.3" fill="#c3cce2"/><rect x="126.5" y="1.6" width="2" height="1.3" fill="#97a7cf"/><rect x="130.5" y="1.6" width="4" height="1.3" fill="#a9b6d6"/><rect x="136.0" y="1.6" width="2" height="1.3" fill="#c3cce2"/><rect x="140.5" y="1.6" width="3" height="1.3" fill="#97a7cf"/><rect x="146.0" y="1.6" width="3" height="1.3" fill="#a9b6d6"/><rect x="151.0" y="1.6" width="2" height="1.3" fill="#a9b6d6"/><rect x="154.5" y="1.6" width="2" height="1.3" fill="#b8c3dd"/><rect x="158.5" y="1.6" width="3" height="1.3" fill="#97a7cf"/><rect x="163.0" y="1.6" width="2" height="1.3" fill="#97a7cf"/><rect x="167.0" y="1.6" width="3" height="1.3" fill="#b8c3dd"/><rect x="172.0" y="1.6" width="4" height="1.3" fill="#c3cce2"/><rect x="178.5" y="1.6" width="4" height="1.3" fill="#a9b6d6"/><rect y="4.3" width="186" height="3.5" fill="#f4f7fc"/><rect x="15" y="5.6" width="17" height="0.9" fill="#6f7684"/><rect x="32" y="5.6" width="60" height="0.9" fill="#c3c8d1"/><rect x="152" y="5.4" width="2" height="1.2" fill="#9aa0aa"/><rect x="158" y="5.4" width="1.5" height="1.2" fill="#9aa0aa"/><rect x="163" y="5.4" width="1.5" height="1.2" fill="#9aa0aa"/><rect x="172" y="5.2" width="10" height="1.6" fill="#4a5a7a"/><rect x="1" y="5.6" width="1.5" height="0.9" fill="#c0c4cc"/><rect x="5" y="5.6" width="1.5" height="0.9" fill="#c0c4cc"/><rect x="10" y="5.4" width="1.5" height="1.2" fill="#b8bdc6"/><rect y="7.8" width="186" height="10.2" fill="#fdfeff"/><rect x="2" y="9.2" width="1" height="1.4" fill="#555"/><rect x="180" y="9.4" width="5" height="0.9" fill="#999"/><rect x="2.2" y="14.4" width="10" height="2.4" fill="#7d4a6a"/><rect x="5" y="13.4" width="3" height="1.2" fill="#3a55b0"/><rect x="160" y="15.2" width="4" height="1.2" fill="#777"/><rect x="167" y="14.8" width="2" height="2" fill="#bbb"/><rect x="170" y="15.2" width="9" height="1" fill="#ccc"/><rect y="18" width="186" height="30" fill="url(#hg)"/><path d="M90 18 C120 22 138 32 146 48" fill="none" stroke="#e2ebf7" stroke-width="2.5"/><circle cx="17.5" cy="41" r="13" fill="url(#cg)"/><rect x="36.6" y="26.8" width="2" height="3" fill="#4f7fc8"/><rect x="39" y="27.8" width="8.4" height="1.8" fill="#6a7898"/><rect x="50.5" y="24.8" width="20" height="1.9" fill="#4a505c"/><rect x="50.5" y="30" width="5" height="1.1" fill="#7a7f88"/><rect x="60" y="30" width="5" height="1.1" fill="#7a7f88"/><rect x="70" y="30" width="2" height="1.1" fill="#7a7f88"/><rect x="78" y="30" width="2" height="1.1" fill="#7a7f88"/><rect x="113" y="25.8" width="11.5" height="5.2" rx="2.6" fill="#fff"/><rect x="117" y="28" width="3.5" height="0.8" fill="#777"/><rect x="127" y="25.8" width="17.5" height="5.2" rx="2.6" fill="#f4f8fd"/><rect x="132" y="28" width="7" height="0.7" fill="#bbb"/><rect x="34" y="40" width="73" height="59" fill="#fff"/><rect x="107" y="38.8" width="37.5" height="23.5" fill="#fff"/><rect x="37" y="42.6" width="2.5" height="1" fill="#333"/><rect x="42" y="42.6" width="2.5" height="1" fill="#e07070"/><rect x="47" y="42.6" width="2.5" height="1" fill="#c0a0d0"/><rect x="52" y="42.6" width="2.5" height="1" fill="#bbb"/><rect x="57" y="42.6" width="2.5" height="1" fill="#bbb"/><rect x="37.5" y="44.7" width="1" height="0.8" fill="#3a6ac0"/><rect x="109.8" y="42.6" width="6" height="1.1" fill="#333"/><rect x="109.8" y="45.6" width="30" height="1" fill="#8a9099"/><rect x="109.8" y="48.4" width="28" height="1" fill="#8a9099"/><rect x="109.8" y="53.4" width="32" height="0.9" fill="#aaa"/><rect x="111.5" y="56" width="14" height="0.9" fill="#aaa"/><rect x="144.5" y="19.3" width="38.5" height="79.5" fill="#fff"/><rect x="181" y="22" width="0.9" height="48" fill="#7a7f88"/><rect x="184.2" y="13" width="1" height="49" fill="#6b6f78"/><rect x="147" y="22.6" width="2" height="0.8" fill="#bbb"/><rect x="151" y="22.4" width="3" height="1.1" fill="#333"/><rect x="170" y="22.6" width="4" height="0.8" fill="#bbb"/><rect x="147" y="27.6" width="8" height="0.9" fill="#777"/><rect x="147" y="57.6" width="9" height="0.9" fill="#777"/><rect x="37.5" y="47.5" width="13.8" height="9.2" fill="#2a6ad8"/><rect x="39.5" y="51.0" width="9.5" height="2" fill="#8bb6f0"/><line x1="53.5" y1="49.1" x2="101.5" y2="49.1" stroke="#7d838d" stroke-width="1.3" stroke-dasharray="1.1 0.45"/><line x1="53.5" y1="51.7" x2="75.5" y2="51.7" stroke="#8a9099" stroke-width="1.3" stroke-dasharray="1.1 0.45"/><rect x="53.5" y="53.8" width="12" height="1" fill="#d2d5da"/><rect x="37.5" y="61.8" width="13.8" height="9.2" fill="#2a6ad8"/><rect x="39.5" y="65.3" width="9.5" height="2" fill="#8bb6f0"/><line x1="53.5" y1="63.4" x2="101.5" y2="63.4" stroke="#7d838d" stroke-width="1.3" stroke-dasharray="1.1 0.45"/><line x1="53.5" y1="66.0" x2="75.5" y2="66.0" stroke="#8a9099" stroke-width="1.3" stroke-dasharray="1.1 0.45"/><rect x="53.5" y="68.1" width="12" height="1" fill="#d2d5da"/><rect x="37.5" y="76.1" width="13.8" height="9.2" fill="#2a6ad8"/><rect x="39.5" y="79.6" width="9.5" height="2" fill="#8bb6f0"/><line x1="53.5" y1="77.69999999999999" x2="101.5" y2="77.69999999999999" stroke="#7d838d" stroke-width="1.3" stroke-dasharray="1.1 0.45"/><line x1="53.5" y1="80.3" x2="75.5" y2="80.3" stroke="#8a9099" stroke-width="1.3" stroke-dasharray="1.1 0.45"/><rect x="53.5" y="82.39999999999999" width="12" height="1" fill="#d2d5da"/><rect x="37.5" y="90.4" width="13.8" height="8.5" fill="#fbfbfc"/><rect x="38" y="91" width="0.6" height="8" fill="#e0c8c0"/><rect x="41.5" y="95.2" width="7" height="1.6" fill="#c8b4a8"/><line x1="53.5" y1="92.19999999999999" x2="101.5" y2="92.19999999999999" stroke="#7d838d" stroke-width="1.3" stroke-dasharray="1.1 0.45"/><line x1="53.5" y1="94.8" x2="56.5" y2="94.8" stroke="#8a9099" stroke-width="1.3" stroke-dasharray="1.1 0.45"/><rect x="53.5" y="96.89999999999999" width="0" height="1" fill="#d2d5da"/><rect y="98.8" width="186" height="5.2" fill="#dfe7f2"/><rect x="90" y="98.8" width="70" height="5.2" fill="#e6e6f4"/><rect x="2" y="100" width="2" height="2.5" fill="#555"/><rect x="5" y="101" width="3" height="1" fill="#aaa"/><rect x="59" y="100.2" width="2.4" height="2.4" fill="#5a86c8"/><rect x="63" y="100.2" width="2.4" height="2.4" fill="#c8ccd4"/><rect x="66" y="100.2" width="2.4" height="2.4" fill="#d0d4da"/><rect x="73" y="100.2" width="2.4" height="2.4" fill="#9aa0aa"/><rect x="79" y="100.2" width="2.4" height="2.4" fill="#5a88c8"/><rect x="83" y="100.2" width="2.4" height="2.4" fill="#6a98d8"/><rect x="87" y="100.2" width="2.4" height="2.4" fill="#7a808a"/><rect x="91" y="100.2" width="2.4" height="2.4" fill="#5a7fc0"/><rect x="95" y="100.2" width="2.4" height="2.4" fill="#7a9ad0"/><rect x="99" y="100.2" width="2.4" height="2.4" fill="#b09ac4"/><rect x="103" y="100.2" width="2.4" height="2.4" fill="#9090d0"/><rect x="107" y="100.2" width="2.4" height="2.4" fill="#9a9ea6"/><rect x="111" y="100.2" width="2.4" height="2.4" fill="#a8c0cc"/><rect x="115" y="100.2" width="2.4" height="2.4" fill="#d0d4da"/><rect x="119" y="100.2" width="2.4" height="2.4" fill="#6a6e76"/><rect x="123" y="100.2" width="2.4" height="2.4" fill="#c0c4cc"/><rect x="168" y="100.6" width="2" height="1.5" fill="#999"/><rect x="173" y="100.6" width="2" height="1.5" fill="#999"/><rect x="178" y="100.2" width="4" height="2.4" fill="#aab"/></g></defs></svg>
<div class="cell" style="left:213px;top:205px"></div>
<svg class="th" style="left:288.5px;top:205px" width="186" height="104" viewBox="0 0 186 104"><use href="#tA"/></svg>
<div class="date" style="left:213px;top:316px">2025-04-09 11:44:32</div>
<div class="cell" style="left:557px;top:205px"></div>
<svg class="th" style="left:632.5px;top:205px" width="186" height="104" viewBox="0 0 186 104"><use href="#tA"/></svg>
<div class="date" style="left:557px;top:316px">2025-04-09 11:44:28</div>
<div class="cell" style="left:901px;top:205px"></div>
<svg class="th" style="left:976.5px;top:205px" width="186" height="104" viewBox="0 0 186 104"><use href="#tA"/></svg>
<div class="date" style="left:901px;top:316px">2025-04-09 11:44:25</div>
<div class="cell" style="left:213px;top:332px"></div>
<svg class="th" style="left:288.5px;top:332px" width="186" height="104" viewBox="0 0 186 104"><use href="#tA"/></svg>
<div class="date" style="left:213px;top:443px">2025-04-09 11:44:22</div>
<div class="cell" style="left:557px;top:332px"></div>
<svg class="th" style="left:632.5px;top:332px" width="186" height="104" viewBox="0 0 186 104"><use href="#tB"/></svg>
<div class="date" style="left:557px;top:443px">2025-04-09 11:44:19</div>
<div class="cell" style="left:901px;top:332px"></div>
<svg class="th" style="left:976.5px;top:332px" width="186" height="104" viewBox="0 0 186 104"><use href="#tB"/></svg>
<div class="date" style="left:901px;top:443px">2025-04-09 11:44:16</div>
<div class="cell" style="left:213px;top:459px"></div>
<svg class="th" style="left:288.5px;top:459px" width="186" height="104" viewBox="0 0 186 104"><use href="#tB"/></svg>
<div class="date" style="left:213px;top:570px">2025-04-09 11:44:13</div>
<div class="cell" style="left:557px;top:459px"></div>
<svg class="th" style="left:632.5px;top:459px" width="186" height="104" viewBox="0 0 186 104"><use href="#tB"/></svg>
<div class="date" style="left:557px;top:570px">2025-04-09 11:44:10</div>
<div class="cell" style="left:901px;top:459px"></div>
<svg class="th" style="left:976.5px;top:459px" width="186" height="104" viewBox="0 0 186 104"><use href="#tC"/></svg>
<div class="date" style="left:901px;top:570px">2025-04-09 11:44:07</div>
<!--/GRID-->

<!-- pagination -->
<div class="a pg" style="left:1074.3px">第</div><div class="a pg" style="left:1088px;font-size:10.5px">1</div><div class="a pg" style="left:1095px">页</div><div class="a pg" style="left:1105.5px">,</div><div class="a pg" style="left:1114.6px">共</div><div class="a pg" style="left:1127px;font-size:10.5px;letter-spacing:-0.3px">2214</div><div class="a pg" style="left:1153px">页</div>

<!-- status bar -->
<div class="a" style="left:0;top:608px;width:1242px;height:16px;background:#1870c4"></div>
<div class="a" style="left:3.5px;top:612.5px;font-size:9.8px;line-height:10px;color:#fff">就绪</div>
<div class="a" style="left:1112px;top:612.5px;font-size:9.8px;line-height:10px;color:#fff">任务中心</div>
<div class="a" style="left:1181px;top:612.5px;font-size:9.8px;line-height:10px;color:#fff">2条未读信息</div>

</body></html>
